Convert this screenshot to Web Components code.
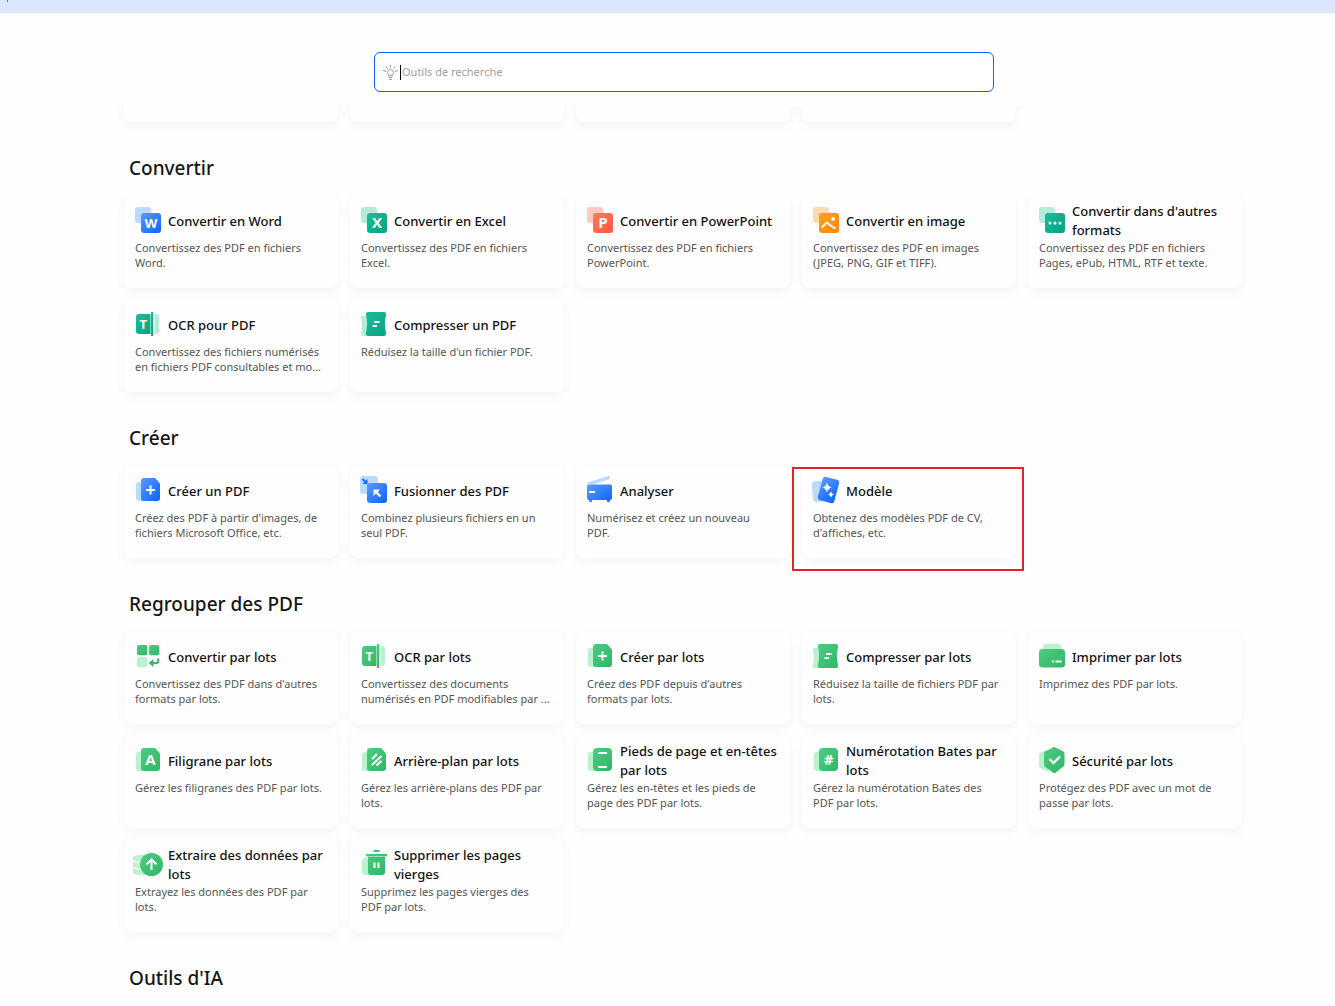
<!DOCTYPE html>
<html lang="fr">
<head>
<meta charset="utf-8">
<meta name="viewport" content="width=device-width, initial-scale=1">
<title>Outils PDF</title>
<style>
  html, body { height: 100%; }
  body { margin: 0; background: #fefefe; color: #1a1a1a; font-family: "Noto Sans", "Open Sans", sans-serif; }
</style>
</head>
<body>
<tools-app></tools-app>
<script>
const grads = {
  blue: ['#5a9bff', '#0a62ff', '#b9dbff'],
  teal: ['#1fb997', '#07a583', '#b5ecd9'],
  red: ['#ff7a62', '#ff583c', '#ffc9bd'],
  orange: ['#ff9f26', '#ff8800', '#fcdcab'],
  green: ['#4ecb83', '#2fb765', '#b9f2cd']
};

const letter = (c, x, y, s = 14) =>
  `<text x="${x}" y="${y}" font-size="${s}" font-weight="700" text-anchor="middle" fill="#fff">${c}</text>`;
const pair = inner => `<rect x="3" y="2" width="16" height="16" rx="3" fill="var(--soft)"/><rect x="9" y="8" width="20" height="20" rx="3" fill="url(#g)"/>${inner}`;
const doc = inner => `<rect x="4" y="7" width="12" height="19" rx="3" fill="var(--soft)"/><path d="M12 3h11l5 5.500V23a3 3 0 0 1-3 3H12a3 3 0 0 1-3-3V6a3 3 0 0 1 3-3z" fill="url(#g)"/>${inner}`;
const line = (d, w = 2) => `<path d="${d}" fill="none" stroke="#fff" stroke-width="${w}"/>`;

const shapes = {
  word: pair(letter('W', 19, 23, 13)),
  excel: pair(letter('X', 19, 23, 15)),
  ppt: pair(letter('P', 19, 23, 15)),
  image: pair(line('M11.500 22.500l5.500-5 3.500 3 5 3', 2) + '<circle cx="23" cy="14" r="2" fill="#fff"/>'),
  more: pair('<g fill="#fff"><circle cx="14" cy="18" r="1.500"/><circle cx="19" cy="18" r="1.500"/><circle cx="24" cy="18" r="1.500"/></g>'),
  ocr: `<path d="M7 5h11.500v20H7a3 3 0 0 1-3-3V8a3 3 0 0 1 3-3z" fill="url(#g)"/><rect x="19" y="3" width="2.200" height="24" fill="url(#g)"/><path d="M22.500 5H24a3 3 0 0 1 3 3v14a3 3 0 0 1-3 3h-1.500z" fill="var(--soft)"/>${letter('T', 11.3, 19.500, 13)}`,
  compress: `<path d="M5 7h8v20H5c-2.500 0-2.200-2-1.600-4q1.400-6 0-12C2.800 9 2.500 7 5 7z" fill="var(--soft)"/><path d="M10.500 3h15c2.500 0 3 1.500 2.400 3.500q-2 8.500 0 17c.6 2 .1 3.500-2.400 3.500h-15c-2.500 0-3-1.500-2.400-3.500q2-8.500 0-17C7.500 4.500 8 3 10.500 3z" fill="url(#g)"/>${line('M16 13h5.500M14.500 17H19')}`,
  create: doc(line('M18.500 10.500v9M14 15h9')),
  merge: `<rect x="2" y="1" width="18" height="18" rx="3.500" fill="var(--soft)"/><path d="M9.500 4v5h-5z" fill="#0a72ff"/><path d="M4.500 4l4 4" stroke="#0a72ff" stroke-width="2"/><rect x="9" y="8" width="20" height="20" rx="3" fill="url(#g)"/><path d="M15.500 14.500h6.500l-6.500 6.500z" fill="#fff"/>${line('M17 16l5.500 5.500', 2.400)}`,
  scan: `<path d="M3 9.500C3 8 4 7.400 5 7L24 1.200c2-.6 3 2.300 1 3L9 9.500z" fill="var(--soft)"/><path d="M5 9.500h21a2 2 0 0 1 2 2V23a2 2 0 0 1-2 2l-.6 2h-2l-.6-2H8.200l-.6 2h-2L5 25a2 2 0 0 1-2-2V11.500a2 2 0 0 1 2-2z" fill="url(#g)"/>${line('M5 17h6')}`,
  template: `<rect x="2.500" y="6" width="14" height="20.500" rx="3" transform="rotate(-4 9 16)" fill="var(--soft)"/><rect x="10" y="3" width="17" height="24" rx="3" transform="rotate(15 18.500 15)" fill="url(#g)"/><path d="M17 7.500q.8 4.200 5 5-4.200.8-5 5-.8-4.200-5-5 4.200-.8 5-5zM21 16.500q.6 2.400 3 3-2.400.6-3 3-.6-2.400-3-3 2.400-.6 3-3z" fill="#fff"/>`,
  batch: `<rect x="5" y="4" width="10.300" height="10.300" rx="2" fill="url(#g)"/><rect x="17" y="4" width="10.300" height="10.300" rx="2" fill="url(#g)"/><rect x="5" y="16" width="10.300" height="10.300" rx="2" fill="var(--soft)"/><path d="M26.200 17.500V20.500q0 1.500-1.500 1.500H21" fill="none" stroke="#35bb6b" stroke-width="2"/><path d="M21.500 18v8L16.500 22z" fill="#35bb6b"/>`,
  print: `<rect x="7" y="3" width="18" height="10" rx="2.500" fill="var(--soft)"/><rect x="3" y="8" width="26" height="18.500" rx="3.500" fill="url(#g)"/>${line('M16 20.500h2M19.500 20.500h6')}`,
  letterA: doc(letter('A', 18.500, 20, 15)),
  stripes: doc(line('M14 14l5-5M14 20l9.500-9M18.500 20.500l5-4.500', 2)),
  header: `<rect x="4" y="7" width="12" height="19" rx="3" fill="var(--soft)"/><rect x="9" y="3" width="19" height="23" rx="4" fill="url(#g)"/>${line('M14 8h9M14 22h9')}`,
  hash: `<rect x="4" y="7" width="12" height="19" rx="3" fill="var(--soft)"/><rect x="9" y="3" width="19" height="23" rx="4" fill="url(#g)"/>${letter('#', 18.500, 20, 15)}`,
  shield: `<path d="M11 4.500L4 8q-1 .5-1 1.500v11q0 1.500 1.500 2.500l8 4z" fill="var(--soft)"/><path d="M17 2.500q1.300-.8 2.600 0L27 6.200q1.500.8 1.500 2.300v10.500q0 1.500-1.200 2.500L19.500 27.800q-1.200.8-2.400 0L9.300 22Q8 21 8 19.500V8.500Q8 7 9.500 6.200z" fill="url(#g)"/>${line('M13.500 14l4 4 6.500-6.500', 2.200)}`,
  extract: `<path d="M1 9c0-3 8-3.500 14-3v20c-6 .8-14 0-14-3V9z" fill="var(--soft)"/><path d="M1 11.500q3 2.300 8 2.300M1 18q3 2.300 8 2.300" fill="none" stroke="#fefefe" stroke-width="1.500"/><circle cx="19.500" cy="15.500" r="11.500" fill="url(#g)"/>${line('M19.500 21V10.500M14.500 15.500l5-5 5 5')}`,
  trash: `<rect x="4" y="9" width="10" height="17" rx="3.500" fill="var(--soft)"/><path d="M15.500 1h6v2h-6zM9 5h19a1 1 0 0 1 0 2.400H9A1 1 0 0 1 9 5zM10 8h17v15a3 3 0 0 1-3 3H13a3 3 0 0 1-3-3z" fill="url(#g)"/>${line('M16.500 13.500V19M20.500 13.500V19')}`
};

class ToolIcon extends HTMLElement {
  connectedCallback() {
    const [from, to, soft] = grads[this.getAttribute('tone')];
    this.attachShadow({ mode: 'open' }).innerHTML = `
      <style>
        :host { display: block; flex: none; width: 32px; height: 32px; --soft: ${soft}; }
        svg { display: block; font-family: "Open Sans", sans-serif; }
      </style>
      <svg width="32" height="32" viewBox="0 0 32 32" aria-hidden="true">
        <defs><linearGradient id="g" x1="0" y1="0" x2="1" y2="1"><stop stop-color="${from}"/><stop offset="1" stop-color="${to}"/></linearGradient></defs>
        ${shapes[this.getAttribute('shape')]}
      </svg>`;
  }
}
customElements.define('tool-icon', ToolIcon);

class ToolCard extends HTMLElement {
  connectedCallback() {
    const shape = this.getAttribute('shape');
    this.attachShadow({ mode: 'open' }).innerHTML = `
      <style>
        :host { display: block; position: relative; height: 92px; }
        :host([marked])::after { content: ""; position: absolute; inset: 1px -8px -13px -10px; border: 2px solid #e8202a; pointer-events: none; }
        a { display: block; box-sizing: border-box; height: 100%; padding: 6px 8px; border-radius: 8px; background: #fefefe; box-shadow: 0 4px 10px rgba(60, 100, 150, .06); color: inherit; text-decoration: none; }
        .head { display: flex; align-items: center; gap: 4px; height: 38px; }
        h3 { margin: 0; font-size: 13px; line-height: 19px; font-weight: 500; color: #111; }
        p { margin: 0 3px; font-size: 11px; line-height: 15px; color: #555; }
      </style>
      <a href="#">${shape ? `<div class="head"><tool-icon shape="${shape}" tone="${this.getAttribute('tone')}"></tool-icon><h3>${this.getAttribute('name')}</h3></div><p><slot></slot></p>` : ''}</a>`;
  }
}
customElements.define('tool-card', ToolCard);

class ToolSection extends HTMLElement {
  connectedCallback() {
    const title = this.getAttribute('heading');
    this.attachShadow({ mode: 'open' }).innerHTML = `
      <style>
        :host { display: block; }
        h2 { margin: 32px 5px 14px; font-size: 19px; line-height: 28px; font-weight: 500; color: #161616; }
        .grid { display: grid; grid-template-columns: repeat(auto-fill, minmax(214px, 1fr)); gap: 12px; }
      </style>
      ${title ? `<h2>${title}</h2>` : ''}
      <div class="grid"><slot></slot></div>`;
  }
}
customElements.define('tool-section', ToolSection);

class ToolSearch extends HTMLElement {
  connectedCallback() {
    this.attachShadow({ mode: 'open' }).innerHTML = `
      <style>
        :host { display: block; }
        label { display: flex; align-items: center; box-sizing: border-box; height: 40px; padding: 0 8px; border: 1px solid #0a64ff; border-radius: 6px; background: #fff; }
        svg { flex: none; margin-right: 2px; }
        .caret { width: 1px; height: 15px; background: #000; margin-right: 1px; }
        input { flex: 1; min-width: 0; border: 0; padding: 0; outline: 0; background: none; font: 11px/16px "Noto Sans", sans-serif; }
        input::placeholder { color: #a0a0a0; opacity: 1; }
      </style>
      <label>
        <svg width="15" height="15" viewBox="0 0 15 15" fill="none" stroke="#9a9cbc" aria-hidden="true"><circle cx="7.500" cy="7.500" r="3"/><path d="M7.500 0v2.500M3 1.500l1.500 2M12 1.500l-1.500 2M0 5.500h1.500M1 6l2 .5M15 5.500h-1.500M14 6l-2 .5M6 10v2.500h3V10M6 14.500h3"/></svg>
        <span class="caret"></span>
        <input type="search" placeholder="Outils de recherche" aria-label="Outils de recherche">
      </label>`;
  }
}
customElements.define('tool-search', ToolSearch);

const sections = [
  ['Convertir', [
    ['word', 'blue', 'Convertir en Word', 'Convertissez des PDF en fichiers Word.'],
    ['excel', 'teal', 'Convertir en Excel', 'Convertissez des PDF en fichiers Excel.'],
    ['ppt', 'red', 'Convertir en PowerPoint', 'Convertissez des PDF en fichiers PowerPoint.'],
    ['image', 'orange', 'Convertir en image', 'Convertissez des PDF en images (JPEG, PNG, GIF et TIFF).'],
    ['more', 'teal', "Convertir dans d'autres formats", 'Convertissez des PDF en fichiers Pages, ePub, HTML, RTF et texte.'],
    ['ocr', 'teal', 'OCR pour PDF', 'Convertissez des fichiers numérisés en fichiers PDF consultables et mo...'],
    ['compress', 'teal', 'Compresser un PDF', "Réduisez la taille d'un fichier PDF."]
  ]],
  ['Créer', [
    ['create', 'blue', 'Créer un PDF', "Créez des PDF à partir d'images, de fichiers Microsoft Office, etc."],
    ['merge', 'blue', 'Fusionner des PDF', 'Combinez plusieurs fichiers en un seul PDF.'],
    ['scan', 'blue', 'Analyser', 'Numérisez et créez un nouveau<br>PDF.'],
    ['template', 'blue', 'Modèle', "Obtenez des modèles PDF de CV, d'affiches, etc.", 'marked']
  ]],
  ['Regrouper des PDF', [
    ['batch', 'green', 'Convertir par lots', "Convertissez des PDF dans d'autres formats par lots."],
    ['ocr', 'green', 'OCR par lots', 'Convertissez des documents numérisés en PDF modifiables par ...'],
    ['create', 'green', 'Créer par lots', "Créez des PDF depuis d'autres formats par lots."],
    ['compress', 'green', 'Compresser par lots', 'Réduisez la taille de fichiers PDF par lots.'],
    ['print', 'green', 'Imprimer par lots', 'Imprimez des PDF par lots.'],
    ['letterA', 'green', 'Filigrane par lots', 'Gérez les filigranes des PDF par lots.'],
    ['stripes', 'green', 'Arrière-plan par lots', 'Gérez les arrière-plans des PDF par lots.'],
    ['header', 'green', 'Pieds de page et en-têtes par lots', 'Gérez les en-têtes et les pieds de page des PDF par lots.'],
    ['hash', 'green', 'Numérotation Bates par lots', 'Gérez la numérotation Bates des<br>PDF par lots.'],
    ['shield', 'green', 'Sécurité par lots', 'Protégez des PDF avec un mot de passe par lots.'],
    ['extract', 'green', 'Extraire des données par lots', 'Extrayez les données des PDF par lots.'],
    ['trash', 'green', 'Supprimer les pages vierges', 'Supprimez les pages vierges des<br>PDF par lots.']
  ]],
  ["Outils d'IA", []]
];

class ToolsApp extends HTMLElement {
  connectedCallback() {
    this.attachShadow({ mode: 'open' }).innerHTML = `
      <style>
        :host { display: flex; flex-direction: column; height: 100vh; }
        .bar { flex: none; height: 13px; background: linear-gradient(#6b7390, #6b7390) 7px 0 / 1px 2px no-repeat #dde6ff; }
        .top { flex: none; display: flex; justify-content: center; padding: 39px 93px 14px 126px; }
        tool-search { flex: 0 1 620px; }
        main { flex: 1; min-height: 0; overflow-y: auto; scrollbar-width: none; padding: 0 93px 0 124px; }
        .previous { margin-top: -76px; }
      </style>
      <div class="bar"></div>
      <div class="top"><tool-search></tool-search></div>
      <main>
        <tool-section class="previous">${'<tool-card></tool-card>'.repeat(4)}</tool-section>
        ${sections.map(([h, cards]) => `<tool-section heading="${h}">${cards.map(([s, t, n, d, m = '']) =>
          `<tool-card shape="${s}" tone="${t}" name="${n}" ${m}>${d}</tool-card>`).join('')}</tool-section>`).join('')}
      </main>`;
  }
}
customElements.define('tools-app', ToolsApp);
</script>
</body>
</html>
